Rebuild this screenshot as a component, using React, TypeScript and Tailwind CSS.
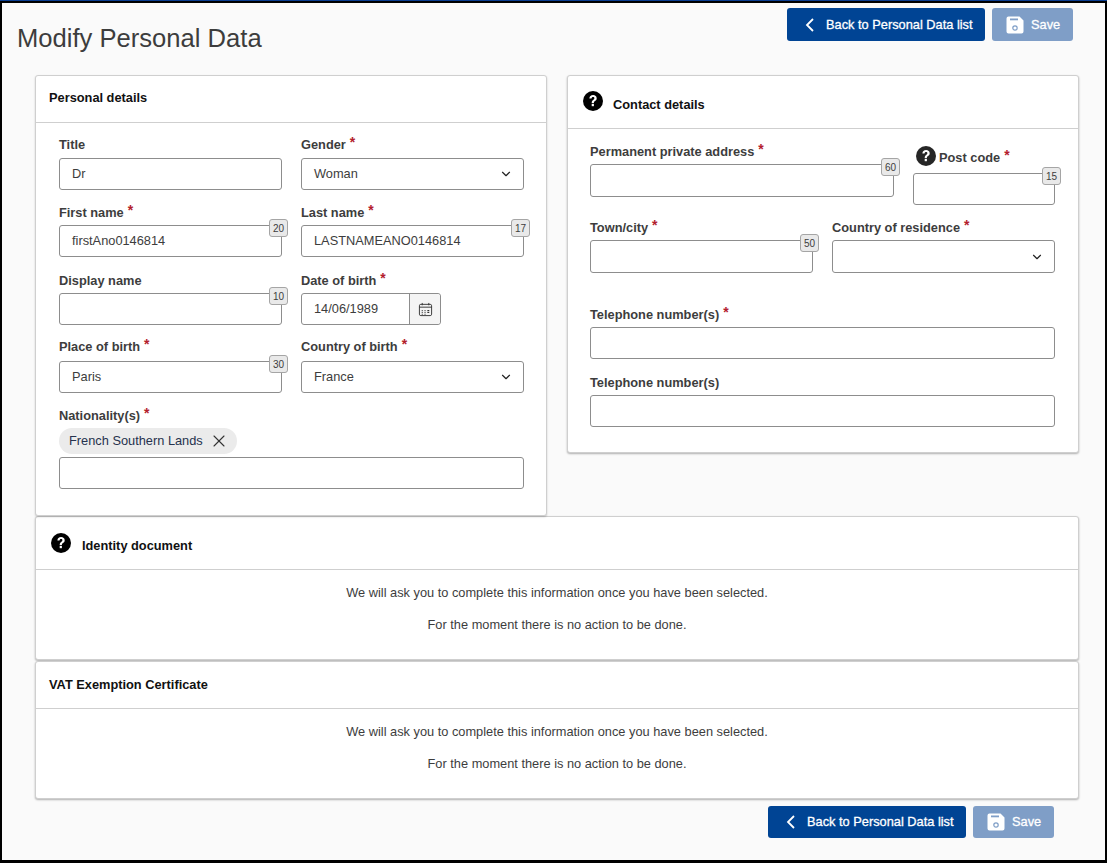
import { ChevronDown, X } from 'lucide-react'

const inputText = 'text-[12.8px] leading-[30px] text-[#3d3d3d]'
const inputBase = `w-full rounded-[3px] border border-[#8d8d8d] bg-white px-3 ${inputText}`

function Req() {
  return <span className="ml-[4px] inline-block -translate-y-[2px] text-[14px] leading-none text-[#b3202c]">*</span>
}

function Help({ dark }: { dark?: boolean }) {
  return (
    <svg viewBox="0 0 20 20" className="h-[20px] w-[20px] shrink-0">
      <circle cx="10" cy="10" r="10" fill={dark ? '#262626' : '#000'} />
      <path d="M6.4 7.6c0-2.1 1.5-3.5 3.7-3.5 2.1 0 3.6 1.3 3.6 3.1 0 1.3-.6 2.1-1.7 2.9-.9.6-1.1 1-1.1 1.8H8.7c0-1.4.4-2.2 1.5-3 .8-.6 1.2-1 1.2-1.6 0-.8-.5-1.3-1.4-1.3-.9 0-1.4.6-1.5 1.6H6.4z" fill="#fff" />
      <rect x="8.7" y="12.8" width="2.2" height="2.4" fill="#fff" />
    </svg>
  )
}

function Label({ text, required, className = 'h-[22px]' }: { text: string; required?: boolean; className?: string }) {
  return (
    <div className={`${className} whitespace-nowrap text-[12.8px] font-bold leading-[20px] text-[#3d3d3d]`}>
      {text}
      {required && <Req />}
    </div>
  )
}

function Counter({ n }: { n: number }) {
  return (
    <span className="absolute -right-[6px] -top-[6px] flex h-[18px] w-[19px] items-center justify-center rounded-[3px] border border-[#a5a5a5] bg-[#e9e9e9] text-[10px] text-[#3d3d3d]">
      {n}
    </span>
  )
}

type FieldProps = {
  label: string
  value?: string
  required?: boolean
  count?: number
  className?: string
  labelClass?: string
  tall?: boolean
}

function TextField({ label, value, required, count, className, labelClass, tall }: FieldProps) {
  return (
    <div className={className}>
      <Label text={label} required={required} className={labelClass} />
      <div className="relative">
        <div className={`${inputBase} ${tall ? 'h-[33px]' : 'h-[32px]'}`}>{value}</div>
        {count !== undefined && <Counter n={count} />}
      </div>
    </div>
  )
}

function SelectField({ label, value, required, className, labelClass, tall }: FieldProps) {
  return (
    <div className={className}>
      <Label text={label} required={required} className={labelClass} />
      <div className={`${inputBase} ${tall ? 'h-[33px]' : 'h-[32px]'} flex items-center justify-between`}>
        <span>{value}</span>
        <ChevronDown size={14} strokeWidth={2} className="-mr-[2px] text-[#222]" />
      </div>
    </div>
  )
}

function FloppyIcon() {
  return (
    <svg viewBox="0 0 18 18" className="h-[18px] w-[18px]">
      <path d="M2.5 0.5h11l4 4v11a2 2 0 0 1-2 2h-13a2 2 0 0 1-2-2v-13a2 2 0 0 1 2-2z" fill="#fff" />
      <rect x="4" y="2.5" width="8" height="1.8" fill="#7f9ec7" />
      <circle cx="9" cy="12" r="2.2" fill="none" stroke="#7f9ec7" strokeWidth="1.2" />
    </svg>
  )
}

function Actions({ className, height }: { className: string; height: string }) {
  return (
    <div className={`flex gap-[7px] ${className}`}>
      <button className={`flex ${height} w-[198px] items-center rounded-[3px] bg-[#004494] pl-[18px] text-[12.8px] text-white [-webkit-text-stroke:0.3px_#fff]`}>
        <svg viewBox="0 0 9 14" className="h-[14px] w-[9px]" fill="none" stroke="#fff" strokeWidth="1.8">
          <path d="M8 1L2 7l6 6" />
        </svg>
        <span className="ml-[12px]">Back to Personal Data list</span>
      </button>
      <button className={`flex ${height} w-[81px] items-center rounded-[3px] bg-[#7f9ec7] pl-[14px] text-[12.8px] text-white [-webkit-text-stroke:0.3px_#fff]`}>
        <FloppyIcon />
        <span className="ml-[7px]">Save</span>
      </button>
    </div>
  )
}

function NoAction({ title, help }: { title: string; help?: boolean }) {
  return (
    <section className={`rounded-[3px] border border-[#cfcfcf] bg-white shadow-[0_1px_2px_rgba(0,0,0,0.3)] ${help ? 'h-[144px]' : 'h-[138px]'}`}>
      <div className={`flex items-center border-b border-[#cfcfcf] ${help ? 'h-[53px] pl-[15px]' : 'h-[47px] pl-[13px]'}`}>
        {help && <span className="mr-[11px]"><Help /></span>}
        <h2 className={`text-[12.8px] font-bold text-[#111] ${help ? 'translate-y-[3px]' : ''}`}>{title}</h2>
      </div>
      <div className="pt-[13px] text-center text-[12.8px] leading-[20px] text-[#3d3d3d]">
        <p>We will ask you to complete this information once you have been selected.</p>
        <p className="mt-[12px]">For the moment there is no action to be done.</p>
      </div>
    </section>
  )
}

export default function App() {
  return (
    <div className="h-[863px] w-[1107px] overflow-hidden border-t border-[#0a3d91] font-['Liberation_Sans',Arial,sans-serif]">
      <div className="h-[862px] border-2 border-b-[3px] border-black bg-[#fafafa]">
        <header className="flex h-[72px] items-start justify-between">
          <h1 className="ml-[15px] mt-[19px] text-[25.6px] leading-[32px] text-[#3d3d3d]">Modify Personal Data</h1>
          <Actions className="mr-[32px] mt-[5px]" height="h-[33px]" />
        </header>

        <div className="ml-[33px] w-[1044px]">
          <div className="flex items-start justify-between">
            <section className="h-[441px] w-[512px] rounded-[3px] border border-[#cfcfcf] bg-white shadow-[0_1px_2px_rgba(0,0,0,0.2)]">
              <div className="flex h-[47px] items-center border-b border-[#cfcfcf] pl-[13px]">
                <h2 className="-translate-y-px text-[12.8px] font-bold text-[#111]">Personal details</h2>
              </div>
              <div className="pl-[23px] pt-[12px]">
                <div className="grid grid-cols-[223px_223px] gap-x-[19px] gap-y-[14px]">
                  <TextField className="-mb-px" labelClass="h-[23px]" label="Title" value="Dr" />
                  <SelectField className="-mb-px" labelClass="h-[23px]" label="Gender" value="Woman" required />
                  <TextField label="First name" value="firstAno0146814" required count={20} />
                  <TextField label="Last name" value="LASTNAMEANO0146814" required count={17} />
                  <TextField label="Display name" count={10} />
                  <div>
                    <Label text="Date of birth" required />
                    <div className="flex h-[32px] w-[140px] rounded-[3px] border border-[#8d8d8d] bg-white">
                      <div className={`flex-1 px-3 ${inputText}`}>14/06/1989</div>
                      <div className="flex w-[31px] items-center justify-center rounded-r-[3px] border-l border-[#8d8d8d] bg-[#f4f4f4]">
                        <svg viewBox="0 0 16 16" className="h-[15px] w-[15px]" fill="none" stroke="#333" strokeWidth="1">
                          <rect x="1.5" y="2.5" width="13" height="12" rx="1.5" />
                          <path d="M1.5 5.5h13M4.5 1v2.5M11.5 1v2.5" />
                          <path d="M4 9h1M7 9h1M10 9h2M4 11h1M7 11h1M10 11h2M4 13h1M7 13h1" strokeWidth="1.2" />
                        </svg>
                      </div>
                    </div>
                  </div>
                  <TextField labelClass="h-[22px] -translate-y-[2px]" label="Place of birth" value="Paris" required count={30} />
                  <SelectField labelClass="h-[22px] -translate-y-[2px]" label="Country of birth" value="France" required />
                </div>
                <div className="mt-[12px] w-[465px]">
                  <Label className="h-[22px] translate-y-px" text="Nationality(s)" required />
                  <div className="mt-[1px] flex h-[26px] w-[178px] items-center rounded-full bg-[#ebebeb] pl-[10px] text-[12.8px] text-[#26324d]">
                    French Southern Lands
                    <X size={20} strokeWidth={1.3} className="ml-[6px] text-[#333]" />
                  </div>
                  <div className={`${inputBase} mt-[3px] h-[32px]`} />
                </div>
              </div>
            </section>

            <section className="h-[378px] w-[512px] rounded-[3px] border border-[#cfcfcf] bg-white shadow-[0_1px_2px_rgba(0,0,0,0.3)]">
              <div className="flex h-[53px] items-center border-b border-[#cfcfcf] pl-[15px]">
                <span className="mr-[10px] -translate-y-px"><Help /></span>
                <h2 className="translate-y-[3px] text-[12.8px] font-bold text-[#111]">Contact details</h2>
              </div>
              <div className="pl-[22px] pr-[23px] pt-[13px]">
                <div className="flex items-end gap-[19px]">
                  <TextField className="w-[304px]" label="Permanent private address" required count={60} tall />
                  <div className="w-[142px] translate-y-[8px]">
                    <div className="flex h-[22px] items-center whitespace-nowrap text-[12.8px] font-bold text-[#3d3d3d]">
                      <span className="ml-[3px] -translate-y-[5px]"><Help dark /></span>
                      <span className="ml-[3px] -translate-y-[3px]">Post code<Req /></span>
                    </div>
                    <div className="relative mt-[1px]">
                      <div className={`${inputBase} h-[32px]`} />
                      <Counter n={15} />
                    </div>
                  </div>
                </div>
                <div className="mt-[21px] grid grid-cols-[223px_223px] gap-x-[19px]">
                  <TextField label="Town/city" required count={50} tall />
                  <SelectField label="Country of residence" required tall />
                </div>
                <TextField className="mt-[32px]" label="Telephone number(s)" required />
                <TextField className="mt-[14px]" label="Telephone number(s)" />
              </div>
            </section>
          </div>

          <NoAction title="Identity document" help />
          <div className="mt-[1px]">
            <NoAction title="VAT Exemption Certificate" />
          </div>
        </div>

        <Actions className="ml-[766px] mt-[7px]" height="h-[32px]" />
      </div>
    </div>
  )
}
